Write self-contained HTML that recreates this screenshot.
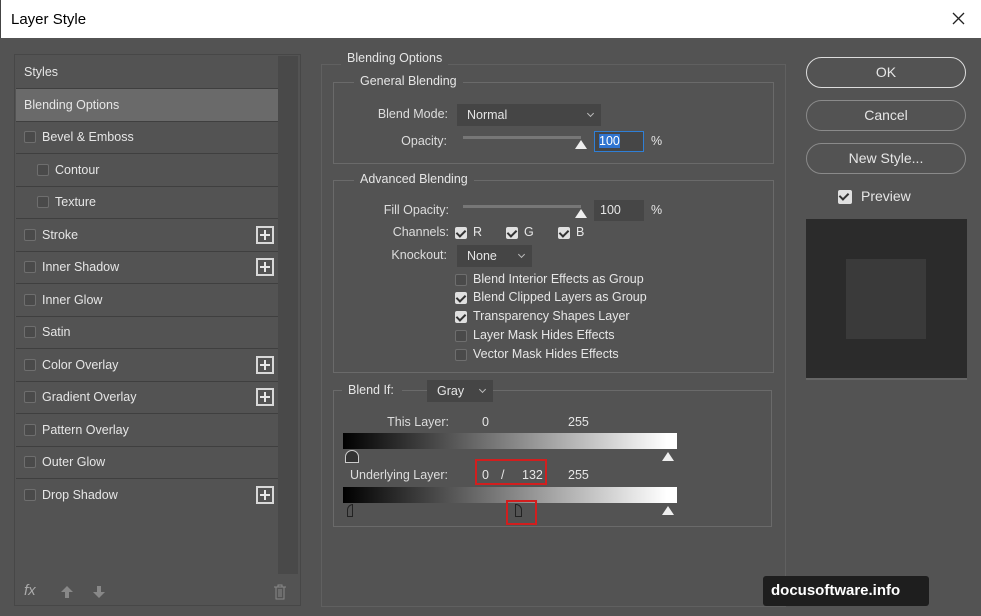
<!DOCTYPE html>
<html><head><style>
*{margin:0;padding:0;box-sizing:border-box}
body{width:981px;height:616px;background:#535353;font-family:"Liberation Sans",sans-serif;font-size:12.5px;color:#e6e6e6;position:relative;overflow:hidden}
.a{position:absolute;white-space:nowrap}
.title{left:0;top:0;width:981px;height:38px;background:#fff;color:#000;font-size:15px;padding:11px 0 0 10px;border-left:1px solid #444;}
.row{position:absolute;left:16px;width:262px;height:33px;border-bottom:1px solid #3f3f3f;line-height:32px;padding-left:8px}
.cb{display:inline-block;width:12px;height:12px;border:1px solid #6e6e6e;background:#4a4a4a;border-radius:2px;vertical-align:-2px;margin-right:6px}
.cbk{position:absolute;width:12px;height:12px;background:#e0e0e0;border-radius:2px}
.cbk:after{content:"";position:absolute;left:3px;top:1px;width:4px;height:7px;border:solid #333;border-width:0 2px 2px 0;transform:rotate(45deg)}
.cbu{position:absolute;width:12px;height:12px;border:1px solid #6e6e6e;background:#4a4a4a;border-radius:2px}
.plus{position:absolute;left:256px;width:18px;height:18px;border:2px solid #d8d8d8}
.plus:before{content:"";position:absolute;left:2px;top:6px;width:10px;height:2px;background:#e8e8e8}
.plus:after{content:"";position:absolute;left:6px;top:2px;width:2px;height:10px;background:#e8e8e8}
.box{position:absolute;border:1px solid #6a6a6a}
.leg{position:absolute;background:#535353;padding:0 6px}
.btn{position:absolute;left:806px;width:160px;height:31px;border:1px solid #8a8a8a;border-radius:16px;text-align:center;line-height:29px;font-size:14px}
.dd{position:absolute;background:#454545;padding-left:10px;line-height:22px;height:22px}
.dd:after{content:"";position:absolute;right:8px;top:7px;width:4px;height:4px;border:solid #bbb;border-width:0 1px 1px 0;transform:rotate(45deg)}
.lbl{position:absolute;text-align:right;color:#ddd}
.grad{position:absolute;left:343px;width:334px;height:16px;background:linear-gradient(90deg,#000,#fff 97%)}
.thumb{position:absolute;width:0;height:0;border-left:6px solid transparent;border-right:6px solid transparent;border-bottom:9px solid #eee}
</style></head><body>
<div class="a title">Layer Style</div>
<svg class="a" style="left:952px;top:12px" width="13" height="13"><path d="M1 1L12 12M12 1L1 12" stroke="#222" stroke-width="1.3"/></svg>

<div class="box" style="left:14px;top:54px;width:287px;height:552px;border-color:#474747"></div>
<div class="a" style="left:278px;top:56px;width:20px;height:518px;background:#494949"></div>
<div class="row" style="top:56px">Styles</div>
<div class="row" style="top:89px;background:#6a6a6a">Blending Options</div>
<div class="row" style="top:121px"><span class="cb"></span>Bevel &amp; Emboss</div>
<div class="row" style="top:154px;padding-left:21px"><span class="cb"></span>Contour</div>
<div class="row" style="top:186px;padding-left:21px"><span class="cb"></span>Texture</div>
<div class="row" style="top:219px"><span class="cb"></span>Stroke</div>
<div class="row" style="top:251px"><span class="cb"></span>Inner Shadow</div>
<div class="row" style="top:284px"><span class="cb"></span>Inner Glow</div>
<div class="row" style="top:316px"><span class="cb"></span>Satin</div>
<div class="row" style="top:349px"><span class="cb"></span>Color Overlay</div>
<div class="row" style="top:381px"><span class="cb"></span>Gradient Overlay</div>
<div class="row" style="top:414px"><span class="cb"></span>Pattern Overlay</div>
<div class="row" style="top:446px"><span class="cb"></span>Outer Glow</div>
<div class="row" style="top:479px;border-bottom:none"><span class="cb"></span>Drop Shadow</div>
<div class="plus" style="top:226px"></div>
<div class="plus" style="top:258px"></div>
<div class="plus" style="top:356px"></div>
<div class="plus" style="top:388px"></div>
<div class="plus" style="top:486px"></div>
<div class="a" style="left:24px;top:582px;font-style:italic;color:#aaa;font-size:15px">fx</div>
<svg class="a" style="left:60px;top:585px" width="14" height="14"><path d="M7 1L13 7H9V13H5V7H1Z" fill="#888"/></svg>
<svg class="a" style="left:92px;top:585px" width="14" height="14"><path d="M7 13L13 7H9V1H5V7H1Z" fill="#888"/></svg>
<svg class="a" style="left:273px;top:584px" width="14" height="16"><path d="M1 3H13M5 3V1H9V3M3 3V15H11V3M6 5V13M8 5V13" stroke="#888" fill="none"/></svg>

<div class="box" style="left:321px;top:64px;width:465px;height:543px;border-color:#606060"></div>
<div class="leg" style="left:341px;top:51px">Blending Options</div>
<div class="box" style="left:333px;top:82px;width:441px;height:82px"></div>
<div class="leg" style="left:354px;top:74px">General Blending</div>
<div class="lbl" style="left:360px;top:107px;width:88px">Blend Mode:</div>
<div class="dd" style="left:457px;top:104px;width:144px">Normal</div>
<div class="lbl" style="left:360px;top:134px;width:87px">Opacity:</div>
<div class="a" style="left:463px;top:136px;width:118px;height:3px;background:#777"></div>
<div class="thumb" style="left:575px;top:140px"></div>
<div class="a" style="left:594px;top:131px;width:50px;height:21px;border:1px solid #2f7fd6;background:#464646;padding:2px 4px"><span style="background:#2f74d0;color:#fff">100</span></div>
<div class="a" style="left:651px;top:134px">%</div>

<div class="box" style="left:333px;top:180px;width:441px;height:193px"></div>
<div class="leg" style="left:354px;top:172px">Advanced Blending</div>
<div class="lbl" style="left:360px;top:203px;width:89px">Fill Opacity:</div>
<div class="a" style="left:463px;top:205px;width:118px;height:3px;background:#777"></div>
<div class="thumb" style="left:575px;top:209px"></div>
<div class="a" style="left:594px;top:200px;width:50px;height:21px;background:#464646;padding:3px 6px">100</div>
<div class="a" style="left:651px;top:203px">%</div>
<div class="lbl" style="left:360px;top:225px;width:89px">Channels:</div>
<div class="cbk" style="left:455px;top:227px"></div><div class="a" style="left:473px;top:225px">R</div>
<div class="cbk" style="left:506px;top:227px"></div><div class="a" style="left:524px;top:225px">G</div>
<div class="cbk" style="left:558px;top:227px"></div><div class="a" style="left:576px;top:225px">B</div>
<div class="lbl" style="left:360px;top:248px;width:87px">Knockout:</div>
<div class="dd" style="left:457px;top:245px;width:75px">None</div>
<div class="cbu" style="left:455px;top:274px"></div><div class="a" style="left:473px;top:272px">Blend Interior Effects as Group</div>
<div class="cbk" style="left:455px;top:292px"></div><div class="a" style="left:473px;top:290px">Blend Clipped Layers as Group</div>
<div class="cbk" style="left:455px;top:311px"></div><div class="a" style="left:473px;top:309px">Transparency Shapes Layer</div>
<div class="cbu" style="left:455px;top:330px"></div><div class="a" style="left:473px;top:328px">Layer Mask Hides Effects</div>
<div class="cbu" style="left:455px;top:349px"></div><div class="a" style="left:473px;top:347px">Vector Mask Hides Effects</div>

<div class="box" style="left:333px;top:390px;width:439px;height:137px"></div>
<div class="leg" style="left:342px;top:383px;padding:0 8px 0 6px">Blend If:</div>
<div class="dd" style="left:427px;top:380px;width:66px">Gray</div>
<div class="lbl" style="left:360px;top:415px;width:89px">This Layer:</div>
<div class="a" style="left:482px;top:415px">0</div>
<div class="a" style="left:568px;top:415px">255</div>
<div class="grad" style="top:433px"></div>
<div class="a" style="left:345px;top:450px;width:14px;height:13px;border:1px solid #ccc;border-radius:7px 7px 0 0;background:#333"></div>
<div class="thumb" style="left:662px;top:452px"></div>
<div class="lbl" style="left:340px;top:468px;width:108px">Underlying Layer:</div>
<div class="a" style="left:482px;top:468px">0</div>
<div class="a" style="left:501px;top:468px">/</div>
<div class="a" style="left:522px;top:468px">132</div>
<div class="a" style="left:568px;top:468px">255</div>
<div class="a" style="left:475px;top:459px;width:72px;height:26px;border:2px solid #d21e1e"></div>
<div class="grad" style="top:487px"></div>
<div class="a" style="left:347px;top:504px;width:6px;height:13px;border:1px solid #222;border-radius:6px 0 0 0"></div>
<div class="a" style="left:515px;top:504px;width:7px;height:13px;border:1px solid #222;border-radius:0 6px 0 0"></div>
<div class="a" style="left:506px;top:500px;width:31px;height:25px;border:2px solid #d21e1e"></div>
<div class="thumb" style="left:662px;top:506px"></div>

<div class="btn" style="top:57px;border-color:#ddd">OK</div>
<div class="btn" style="top:100px">Cancel</div>
<div class="btn" style="top:143px">New Style...</div>
<div class="cbk" style="left:838px;top:190px;width:14px;height:14px"></div>
<div class="a" style="left:861px;top:188px;font-size:14px">Preview</div>
<div class="a" style="left:806px;top:219px;width:161px;height:161px;background:#2b2b2b;border-bottom:2px solid #666"></div>
<div class="a" style="left:846px;top:259px;width:80px;height:80px;background:#3a3a3a"></div>

<div class="a" style="left:763px;top:576px;width:166px;height:30px;background:#1e1e1e;border-radius:3px;color:#fff;font-weight:bold;font-size:15px;padding:6px 0 0 8px">docusoftware.info</div>
</body></html>
